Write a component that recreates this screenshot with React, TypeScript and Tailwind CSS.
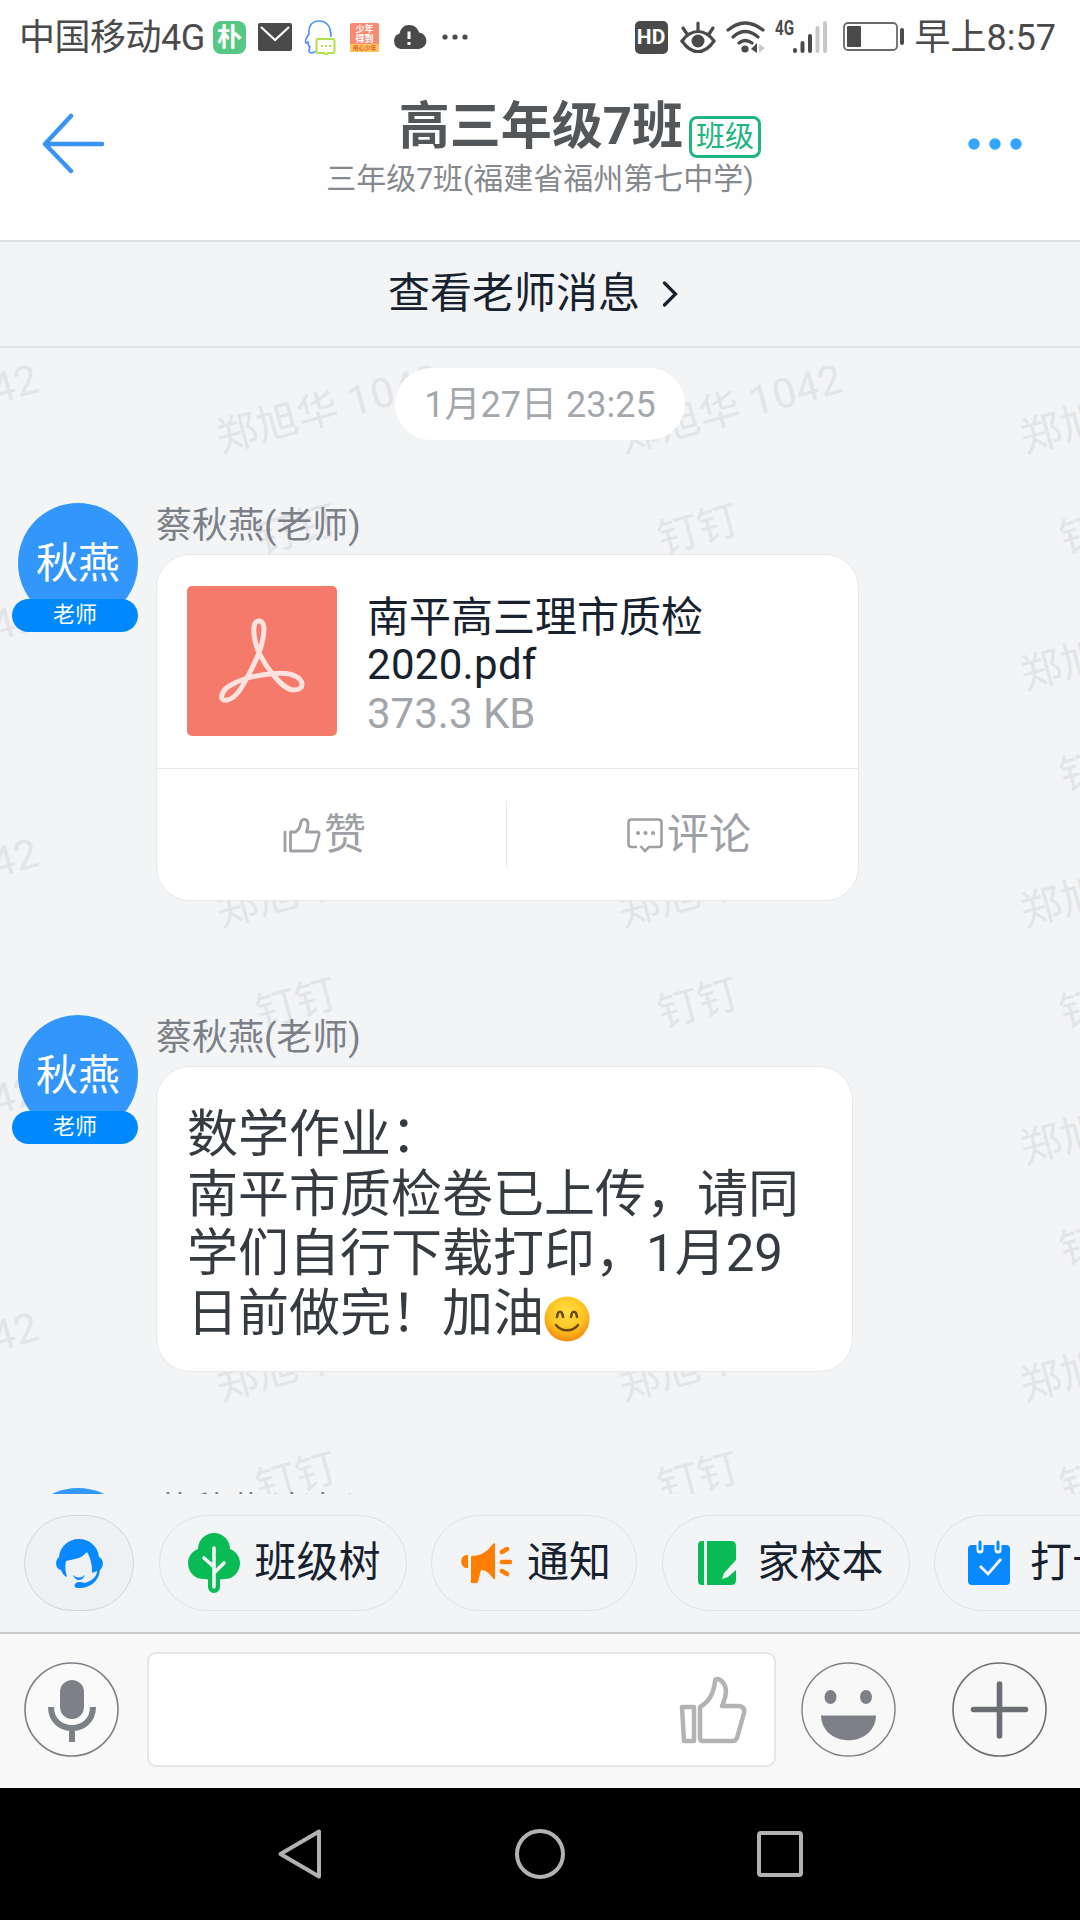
import type { ReactNode } from "react";

const WATERMARK_COLS = [-1, 0, 1, 2];
const WATERMARK_ROWS = [0, 1, 2, 3, 4];

function Watermark() {
  return (
    <svg
      className="absolute inset-0 h-full w-full"
      fill="#e2e4e7"
      fontSize="41"
      textAnchor="middle"
    >
      {WATERMARK_ROWS.map((row) =>
        WATERMARK_COLS.map((col) => (
          <g key={`${row}-${col}`} transform={`translate(${402 * col} ${237 * row})`}>
            <text transform="translate(332 74) rotate(-15.5)" textLength="230">
              郑旭华 1042
            </text>
            <text transform="translate(300 195) rotate(-15.5)">钉钉</text>
          </g>
        ))
      )}
    </svg>
  );
}

function StatusBar() {
  return (
    <div className="flex h-[74px] items-center justify-between pr-[24px] pl-[19px] text-[36px] leading-none text-[#4a4a4a]">
      <div className="flex items-center">
        <span className="w-[194px] pt-[2px] tracking-[-0.5px] whitespace-nowrap">中国移动4G</span>
        <span className="flex h-[33px] w-[33px] items-center justify-center rounded-[8px] bg-[#57c785] text-[25px] font-bold text-white">
          朴
        </span>
        <svg className="ml-[12px]" width="34" height="28" viewBox="0 0 34 28">
          <rect width="34" height="28" rx="2" fill="#4a4a4a" />
          <path d="M3 4l14 13L31 4" fill="none" stroke="#fff" strokeWidth="2.2" />
        </svg>
        <svg className="ml-[12px]" width="32" height="35" viewBox="0 0 32 35" fill="none">
          <path
            d="M12 31c-3 3-8 2-7-1l1-3c-2-1-2-3-2-5l-2 1c-2-3 1-6 3-9C4 6 8 1 15 1s12 5 12 16"
            stroke="#4c8df5"
            strokeWidth="1.6"
          />
          <path
            d="M14 19h15q1.500 0 1.500 1.500v11q0 1.500-1.500 1.500h-5l-2 2-2-2h-6q-1.500 0-1.500-1.500v-11q0-1.500 1.500-1.500z"
            fill="#fff"
            stroke="#b5de4c"
            strokeWidth="2"
          />
          <path d="M17 26h2M21 26h2M25 26h2" stroke="#b5de4c" strokeWidth="2" />
        </svg>
        <span className="ml-[14px] flex h-[29px] w-[29px] flex-col items-center justify-between rounded-[2px] bg-[#fb8a72] pt-px text-[9px] leading-[10px] font-bold text-white">
          <span>少年</span>
          <span>得到</span>
          <span className="h-[8px] w-full bg-[#fbc65c] text-center text-[6px] leading-[8px] text-[#e8622f]">
            用心少年
          </span>
        </span>
        <svg className="ml-[14px]" width="34" height="24" viewBox="0 0 34 24">
          <path
            d="M8 24a8 8 0 0 1-1.500-15.500C8 3 11 0 16 0c5.500 0 9 3.500 10 7.500A8.300 8.300 0 0 1 26 24z"
            fill="#4a4a4a"
          />
          <path d="M16 6.500v7.500M16 17v3" stroke="#fff" strokeWidth="3" />
        </svg>
        <svg className="ml-[15px]" width="26" height="6" viewBox="0 0 26 6" fill="#4a4a4a">
          <circle cx="3" cy="3" r="2.600" />
          <circle cx="13" cy="3" r="2.600" />
          <circle cx="23" cy="3" r="2.600" />
        </svg>
      </div>
      <div className="flex items-center">
        <span className="flex h-[33px] w-[33px] items-center justify-center rounded-[5px] bg-[#4a4a4a] text-[21px] font-bold text-white">
          HD
        </span>
        <svg className="ml-[12px]" width="36" height="33" viewBox="0 0 36 33" fill="none" stroke="#4a4a4a">
          <path d="M2 20Q9 10.500 18 10.500T34 20Q27 30.500 18 30.500T2 20z" strokeWidth="3.200" />
          <circle cx="18" cy="20" r="6.500" fill="#4a4a4a" stroke="none" />
          <path d="M18 9V2M7 13L3 7M29 13l4-6" strokeWidth="3.200" strokeLinecap="round" />
        </svg>
        <svg className="ml-[10px]" width="40" height="34" viewBox="0 0 40 34" fill="none" stroke="#4a4a4a">
          <path d="M2 10Q19-4 37 10M7 17Q19 6 32 17M13 23Q19 18 26 23" strokeWidth="3.200" strokeLinecap="round" />
          <circle cx="19" cy="29" r="3.600" fill="#4a4a4a" stroke="none" />
          <path d="M31 23v10l-6-4z" fill="#4a4a4a" stroke="none" />
          <path d="M33 24v9l6-5z" fill="#c9c9c9" stroke="none" />
        </svg>
        <div className="ml-[9px] flex h-[36px] w-[54px] items-start">
          <svg width="54" height="36" viewBox="0 0 54 36" stroke="#4a4a4a" strokeWidth="4" strokeLinecap="round">
            <text x="0" y="16" fontSize="21" fontWeight="700" textLength="19" lengthAdjust="spacingAndGlyphs" fill="#4a4a4a" stroke="none">
              4G
            </text>
            <path d="M20 31v1M27.500 24v8M35 17v15" />
            <path d="M42.500 9v23M50 4v28" stroke="#c9c9c9" />
          </svg>
        </div>
        <svg className="ml-[14px]" width="61" height="30" viewBox="0 0 61 30">
          <rect x="1" y="1" width="53" height="27" rx="4" fill="none" stroke="#6a6a6a" strokeWidth="1.800" />
          <rect x="4" y="4" width="14" height="21" rx="1" fill="#4a4a4a" />
          <rect x="57" y="6" width="4" height="17" rx="2" fill="#4a4a4a" />
        </svg>
        <span className="ml-[11px] pt-[2px] whitespace-nowrap">早上8:57</span>
      </div>
    </div>
  );
}

function Header() {
  return (
    <header className="flex h-[168px] items-start justify-between border-b-2 border-[#dfe1e3] pr-[58px] pl-[42px]">
      <svg className="mt-[39px]" width="62" height="62" viewBox="0 0 62 62" fill="none" stroke="#3a95f2" strokeWidth="4.500">
        <path d="M3 31h57M29 3L3 31l26 27" strokeLinejoin="round" strokeLinecap="round" />
      </svg>
      <div className="ml-[8px] flex flex-col items-center">
        <div className="ml-[80px] flex items-start">
          <h1 className="mt-[25px] text-[51px] leading-[56px] font-bold text-[#53575a]">高三年级7班</h1>
          <span className="mt-[42px] ml-[6px] flex h-[42px] w-[72px] items-center justify-center rounded-[8px] border-[3px] border-[#1fb57f] pt-px text-[29px] leading-none text-[#1fb57f]">
            班级
          </span>
        </div>
        <p className="mt-[1px] text-[30px] leading-[40px] text-[#85898d]">三年级7班(福建省福州第七中学)</p>
      </div>
      <svg className="mt-[64px]" width="54" height="12" viewBox="0 0 54 12" fill="#34a5fb">
        <circle cx="6" cy="6" r="5.700" />
        <circle cx="27" cy="6" r="5.700" />
        <circle cx="48" cy="6" r="5.700" />
      </svg>
    </header>
  );
}

function Avatar() {
  return (
    <div className="relative ml-[18px] h-[129px] w-[120px] shrink-0">
      <div className="flex h-[120px] w-[120px] items-center justify-center rounded-full bg-[#3296fa] pt-[2px] text-[42px] leading-none text-white">
        秋燕
      </div>
      <div className="absolute bottom-0 -left-[6px] flex h-[33px] w-[126px] items-center justify-center rounded-full bg-[#0089ff] pb-[2px] text-[22px] leading-none text-white">
        老师
      </div>
    </div>
  );
}

function Message({ children }: { children?: ReactNode }) {
  return (
    <div className="relative flex items-start">
      <Avatar />
      <div className="ml-[18px]">
        <div className="h-[51px] pt-[2px] text-[36px] leading-[42px] text-[#7c8187]">蔡秋燕(老师)</div>
        {children}
      </div>
    </div>
  );
}

function PdfIcon() {
  return (
    <svg width="150" height="150" viewBox="0 0 150 150" fill="none">
      <rect width="150" height="150" rx="5" fill="#f67a6b" />
      <path
        d="M72 35c-8 0-6 17 0 32 5 10 10 17 15 23 7 8 13 14 20 14 11 0 10-10 1-14-7-4-21-3-33-1-13 2-24 6-31 10-10 5-13 17-4 15 9-1 16-14 23-28 5-10 10-19 12-29 3-12 3-22-3-22z"
        stroke="#fde3df"
        strokeWidth="5"
        strokeLinejoin="round"
      />
    </svg>
  );
}

function ThumbIcon() {
  return (
    <svg width="38" height="36" viewBox="0 0 38 36" fill="none" stroke="#9da0a5" strokeWidth="2.800">
      <path d="M2 14v21" />
      <path
        d="M7.500 15h5c3-2 4.500-4 5-8 .5-6 7-6 7.500-.5.200 3-.500 6-1.500 8.500H34c2 0 2.500 1 2 3l-3.500 13c-.5 2-1.500 3-3.500 3H7.500z"
        strokeLinejoin="round"
      />
    </svg>
  );
}

function CommentIcon() {
  return (
    <svg width="36" height="36" viewBox="0 0 36 36" fill="none" stroke="#9da0a5" strokeWidth="2.600">
      <path d="M10 30H4.500Q1.500 30 1.500 27V5.500Q1.500 2.500 4.500 2.500h27Q34.500 2.500 34.500 5.500V27q0 3-3 3H22l-4 4-4.500-5" />
      <g fill="#9da0a5" stroke="none">
        <circle cx="11" cy="16" r="2.100" />
        <circle cx="18.500" cy="16" r="2.100" />
        <circle cx="26" cy="16" r="2.100" />
      </g>
    </svg>
  );
}

function FileCard() {
  return (
    <div className="h-[347px] w-[703px] rounded-[34px] border border-[#e6e8ea] bg-white">
      <div className="flex h-[214px] items-start border-b border-[#e6e8ea] pt-[31px] pl-[30px]">
        <PdfIcon />
        <div className="ml-[30px] pt-[5px] text-[42px] leading-[49px] text-[#17222e]">
          <div className="relative top-[2px]">南平高三理市质检</div>
          <div className="tracking-[0.3px]">2020.pdf</div>
          <div className="text-[#a2a6ab]">373.3 KB</div>
        </div>
      </div>
      <div className="flex h-[131px] items-center text-[42px] leading-none text-[#9da0a5]">
        <div className="flex w-[349px] items-center justify-center pr-[14px]">
          <ThumbIcon />
          <span className="ml-[3px]">赞</span>
        </div>
        <div className="mb-[2px] h-[66px] w-px bg-[#e6e8ea]" />
        <div className="flex flex-1 items-center justify-center pl-[13px]">
          <CommentIcon />
          <span className="ml-[4px]">评论</span>
        </div>
      </div>
    </div>
  );
}

function SmileEmoji() {
  return (
    <svg className="inline-block align-[-11px]" width="46" height="46" viewBox="0 0 46 46" fill="none">
      <defs>
        <radialGradient id="face" cx="0.5" cy="0.35" r="0.65">
          <stop offset="0" stopColor="#ffe04a" />
          <stop offset="0.6" stopColor="#fdc41f" />
          <stop offset="1" stopColor="#f58a12" />
        </radialGradient>
      </defs>
      <circle cx="23" cy="23" r="22.500" fill="url(#face)" />
      <path d="M13 21c1-7 5-7 6 0M27 21c1-7 5-7 6 0" stroke="#6d4710" strokeWidth="2.600" strokeLinecap="round" />
      <path d="M12 29c5 7 17 7 22 0" stroke="#6d4710" strokeWidth="2.400" strokeLinecap="round" />
    </svg>
  );
}

function TextCard() {
  return (
    <div className="h-[306px] w-[697px] rounded-[34px] border border-[#e6e8ea] bg-white pt-[38px] pl-[30px] text-[51px] leading-[59.5px] whitespace-nowrap text-[#363b41]">
      <div>数学作业：</div>
      <div>南平市质检卷已上传，请同</div>
      <div>学们自行下载打印，1月29</div>
      <div>
        日前做完！加油
        <SmileEmoji />
      </div>
    </div>
  );
}

function Chat() {
  return (
    <main className="relative h-[1146px] overflow-hidden">
      <Watermark />
      <div className="relative mx-auto mt-[20px] flex h-[72px] w-[290px] items-center justify-center rounded-full bg-white pt-px text-[36px] leading-none text-[#a4a8ad]">
        1月27日 23:25
      </div>
      <div className="mt-[63px] h-[512px]">
        <Message>
          <FileCard />
        </Message>
      </div>
      <div className="h-[473px]">
        <Message>
          <TextCard />
        </Message>
      </div>
      <Message />
    </main>
  );
}

function ServiceIcon() {
  return (
    <svg width="49" height="51" viewBox="0 0 49 51">
      <path
        d="M4 19C5 8 14 1 24 1s19 7 20 18c5 2 5 10 1 13-1 11-9 17-19 18-9 1-8-6-1-6 3 0 4 1 5 1 9-3 12-8 12-12l-5 2c0-8-1-14-5-21-5 7-13 7-21 9-1 5-1 9 1 16-3-1-5-4-6-7-5 0-7-9-2-13z"
        fill="#0a89ff"
      />
      <path d="M11 24c8-2 15-3 20-9 4 5 6 14 6 19-4 6-8 9-13 9-7 0-13-9-13-19z" fill="#eef2f5" />
      <path d="M18 37q6 5 12 0-2 5-6 5t-6-5z" fill="#0a89ff" />
    </svg>
  );
}

function TreeIcon() {
  return (
    <svg width="54" height="60" viewBox="0 0 54 60">
      <path
        d="M11 16a16 16 0 0 1 32 0c6 2 10 8 10 14 0 10-8 17-17 16l-3 .5V54a6 6 0 0 1-12 0v-7.500L18 46C9 47 1 40 1 30c0-6 4-12 10-14z"
        fill="#09bb54"
      />
      <path d="M27 15v39M17 25l10 9M27 40l10-10" fill="none" stroke="#f2f4f6" strokeWidth="3.600" strokeLinecap="round" />
    </svg>
  );
}

function MegaphoneIcon() {
  return (
    <svg width="52" height="42" viewBox="0 0 52 42" fill="#ff7d00">
      <path d="M8 13v13c-9 1-9-14 0-13zM11 14c8 0 15-3 20-10q3-3 4-3v36q-1 1-3-2-6-8-11-7l-3 12q0 1-2 1h-4q-2 0-1-2z" />
      <path d="M42 10l5-3M42 20h8M42 29l5 3" stroke="#ff7d00" strokeWidth="4.500" strokeLinecap="round" />
    </svg>
  );
}

function NotebookIcon() {
  return (
    <svg width="40" height="44" viewBox="0 0 40 44">
      <path d="M7 0v44H5q-4 0-4-4V4q0-4 4-4zM10 0h24q5 0 5 5v14L27 32l-2 6 6-2 8-7v10q0 5-5 5H10z" fill="#09bb54" />
    </svg>
  );
}

function CalendarIcon() {
  return (
    <svg width="42" height="46" viewBox="0 0 42 46" fill="none">
      <rect y="5" width="42" height="40" rx="4" fill="#0a89ff" />
      <path d="M12 3v7M30 3v7" stroke="#f2f4f6" strokeWidth="7" strokeLinecap="round" />
      <path d="M12 2v7M30 2v7" stroke="#0a89ff" strokeWidth="3" strokeLinecap="round" />
      <path d="M12 26l8 8 13-15" stroke="#f2f4f6" strokeWidth="2.800" />
    </svg>
  );
}

function Chip({ icon, label }: { icon: ReactNode; label: string }) {
  return (
    <div className="flex h-[96px] shrink-0 items-center rounded-full border border-[#dfe1e4] pr-[25px] pl-[27px]">
      <span className="flex w-[54px] justify-center">{icon}</span>
      <span className="ml-[14px] text-[42px] leading-none whitespace-nowrap text-[#17222e]">{label}</span>
    </div>
  );
}

function Shortcuts() {
  return (
    <div className="flex h-[140px] gap-[24.5px] overflow-hidden border-b-2 border-[#c9cacc] pt-[21px] pl-[24px]">
      <div className="flex h-[96px] w-[110px] shrink-0 items-center justify-center rounded-full border border-[#d3d6d9] bg-[#edf1f4]">
        <ServiceIcon />
      </div>
      <Chip icon={<TreeIcon />} label="班级树" />
      <Chip icon={<MegaphoneIcon />} label="通知" />
      <Chip icon={<NotebookIcon />} label="家校本" />
      <Chip icon={<CalendarIcon />} label="打卡" />
    </div>
  );
}

function InputBar() {
  return (
    <div className="flex h-[154px] items-center bg-[#f8f8f8] pb-[3px] pl-[24px]">
      <svg width="95" height="95" viewBox="0 0 95 95" fill="none" stroke="#7d8187">
        <circle cx="47.500" cy="47.500" r="46.500" strokeWidth="1.600" fill="#fafafa" />
        <rect x="36" y="18" width="24" height="39" rx="12" fill="#7d8187" stroke="none" />
        <path d="M27 45c0 28 42 28 42 0M48 66v14" strokeWidth="6" />
      </svg>
      <div className="ml-[28px] flex h-[115px] w-[629px] items-center justify-end rounded-[9px] border-2 border-[#e4e5e7] bg-white pr-[27px]">
        <svg width="68" height="70" viewBox="0 0 68 70" fill="none" stroke="#b3b3b3" strokeWidth="4.500" strokeLinejoin="round">
          <path d="M3 32h12v34H5z" />
          <path d="M21 32C30 27 35 17 36 6c0-4 10-2 11 10 0 7-2 10-4 15h16c5 0 7 3 6 7l-7 25c-1 2-2 3-4 3H24q-3 0-3-3z" />
        </svg>
      </div>
      <svg className="ml-[25px]" width="95" height="95" viewBox="0 0 95 95" fill="#7d8187">
        <circle cx="47.500" cy="47.500" r="46.500" fill="none" stroke="#7d8187" strokeWidth="1.400" />
        <ellipse cx="29.500" cy="35" rx="6" ry="7" />
        <ellipse cx="65" cy="35" rx="6" ry="7" />
        <path d="M20 53.500h55c-1 33-54 33-55 0z" />
      </svg>
      <svg className="ml-[56px]" width="95" height="95" viewBox="0 0 95 95" fill="none" stroke="#6b6e73">
        <circle cx="47.500" cy="47.500" r="46.500" strokeWidth="1.600" />
        <path d="M47.500 22v52M21.500 47.500h52" strokeWidth="5.600" strokeLinecap="round" />
      </svg>
    </div>
  );
}

function NavBar() {
  return (
    <nav className="flex h-[132px] items-center bg-black pl-[277px]">
      <svg width="46" height="52" viewBox="0 0 46 52" fill="none" stroke="#b2b2b2" strokeWidth="4">
        <path d="M42 3.500v45L3.500 26z" strokeLinejoin="round" />
      </svg>
      <div className="ml-[192px] h-[50px] w-[50px] rounded-full border-4 border-[#b2b2b2]" />
      <div className="ml-[192px] h-[46px] w-[46px] rounded-[4px] border-4 border-[#b2b2b2]" />
    </nav>
  );
}

export default function App() {
  return (
    <div
      lang="zh-CN"
      className="h-[1920px] w-[1080px] overflow-hidden bg-[#f2f4f6] font-[Roboto,'Noto_Sans_CJK_SC',sans-serif]"
    >
      <div className="bg-[#fefefe]">
        <StatusBar />
        <Header />
      </div>
      <div className="flex h-[106px] items-center justify-center border-b-2 border-[#dfe1e3] text-[42px] leading-none text-[#17222e]">
        <span className="ml-[-14px]">查看老师消息</span>
        <svg className="ml-[22px]" width="16" height="26" viewBox="0 0 16 26" fill="none" stroke="#17222e" strokeWidth="3.200">
          <path d="M2.500 2l11 11-11 11" strokeLinecap="round" />
        </svg>
      </div>
      <Chat />
      <Shortcuts />
      <InputBar />
      <NavBar />
    </div>
  );
}
